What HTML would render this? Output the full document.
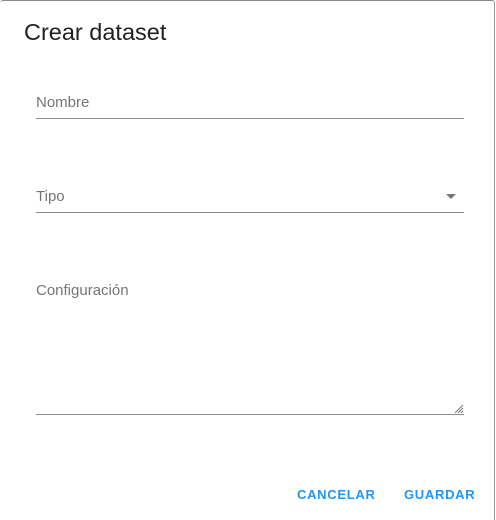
<!DOCTYPE html>
<html><head><style>
html,body{margin:0;padding:0;background:#fff;}
body{width:496px;height:519px;position:relative;overflow:hidden;font-family:"Liberation Sans",sans-serif;}
.frame{position:absolute;left:0;top:0;width:494px;height:519px;border-top:1px solid #8a8a8a;border-right:1px solid #9a9a9a;border-top-right-radius:3px;border-top-left-radius:3px;}
.t{position:absolute;left:24px;top:19px;font-size:23.5px;color:#212121;}
.lbl{position:absolute;left:36px;font-size:15px;color:#757575;}
.ln{position:absolute;left:36px;width:428px;height:1px;background:#8c8c8c;}
.btn{position:absolute;top:487px;font-size:13px;font-weight:bold;color:#2196f3;letter-spacing:0.7px;}
</style></head><body>
<div class="frame"></div>
<div class="t">Crear dataset</div>
<div class="lbl" style="top:94px">Nombre</div>
<div class="ln" style="top:118px"></div>
<div class="lbl" style="top:188px">Tipo</div>
<svg style="position:absolute;left:446px;top:194px" width="10" height="6"><path d="M0 0 L10 0 L5 5Z" fill="#757575"/></svg>
<div class="ln" style="top:212px"></div>
<div class="lbl" style="top:282px">Configuración</div>
<svg style="position:absolute;left:454px;top:404px" width="10" height="10"><path d="M1 9 L9 1 M4 9 L9 4 M7 9 L9 7" stroke="#777" stroke-width="1"/></svg>
<div class="ln" style="top:414px"></div>
<div class="btn" style="left:297px">CANCELAR</div>
<div class="btn" style="left:404px">GUARDAR</div>
</body></html>
